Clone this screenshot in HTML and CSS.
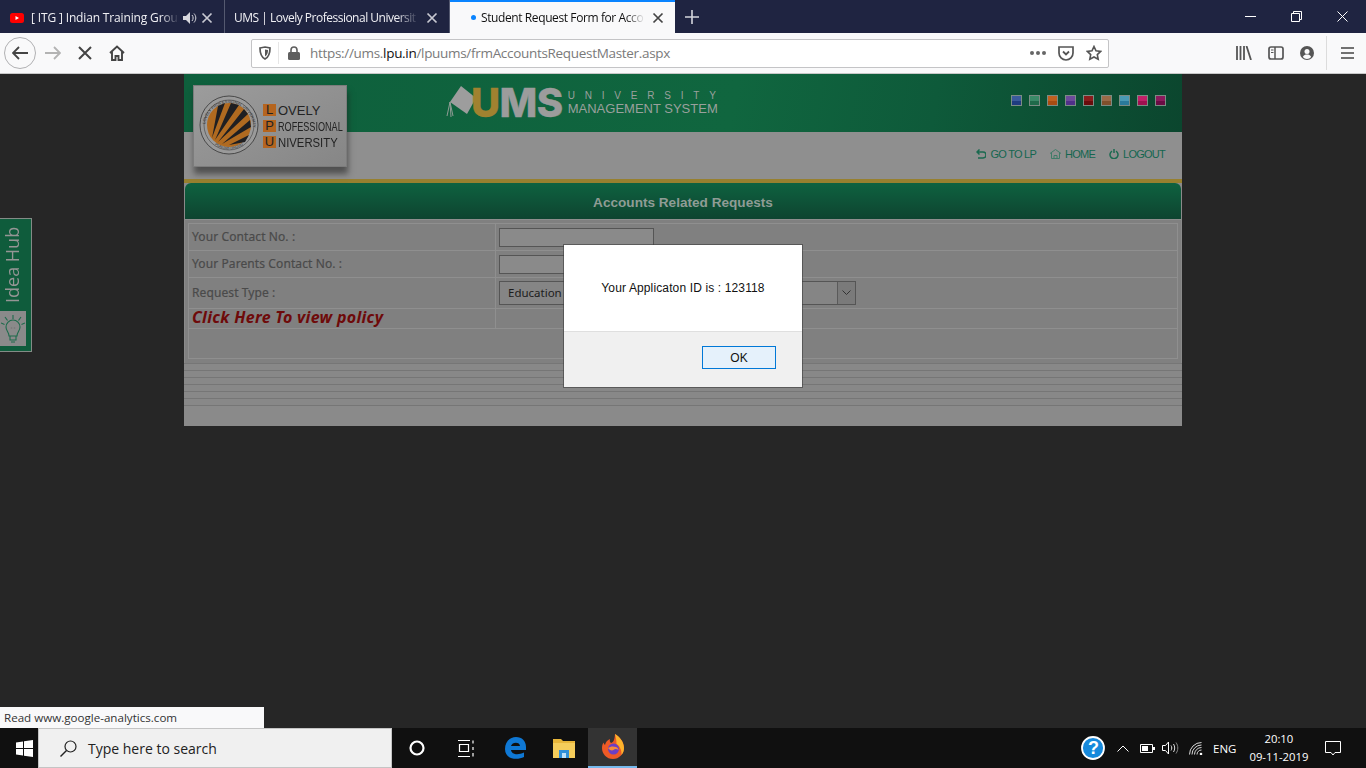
FILE: index.html
```html
<!DOCTYPE html>
<html lang="en">

<head>
    <meta charset="UTF-8">
    <meta name="viewport" content="width=device-width, initial-scale=1.0">
    <title>Student Request Form for Accounts</title>
    <link rel="stylesheet" href="styles.css">
</head>

<body>
    <!-- browser tabs -->
    <div class="tabbar">
        <div class="tab">
            <svg class="favicon" width="14" height="10" viewBox="0 0 14 10"><rect width="14" height="10" rx="2.5" fill="#f00"/><path d="M5.5 3v4L9 5z" fill="#fff"/></svg>
            <span class="tab-title">[ ITG ] Indian Training Groun</span>
            <svg class="tab-audio" width="14" height="12" viewBox="0 0 14 12"><path d="M0 4h3l4-4v12L3 8H0z" fill="#d8d8de"/><path d="M9 3c1.500 1.800 1.500 4.200 0 6M11 1.500c2.400 2.700 2.400 6.300 0 9" stroke="#d8d8de" fill="none"/></svg>
            <svg class="tab-close" width="12" height="12" viewBox="0 0 12 12"><path d="M1.500 1.500l9 9M10.500 1.500l-9 9" stroke="#c8c9d2" stroke-width="1.700"/></svg>
        </div>
        <div class="tab">
            <span class="tab-title tab-title-plain">UMS | Lovely Professional Universit</span>
            <svg class="tab-close" width="12" height="12" viewBox="0 0 12 12"><path d="M1.500 1.500l9 9M10.500 1.500l-9 9" stroke="#c8c9d2" stroke-width="1.700"/></svg>
        </div>
        <div class="tab tab-active">
            <span class="tab-dot"></span>
            <span class="tab-title">Student Request Form for Acco</span>
            <svg class="tab-close" width="12" height="12" viewBox="0 0 12 12"><path d="M1.500 1.500l9 9M10.500 1.500l-9 9" stroke="#444" stroke-width="1.700"/></svg>
        </div>
        <svg class="new-tab" width="14" height="14" viewBox="0 0 14 14"><path d="M7 0v14M0 7h14" stroke="#d4d5dc" stroke-width="1.600"/></svg>
        <div class="win-buttons">
            <svg width="11" height="11" viewBox="0 0 11 11"><path d="M0 5.500h11" stroke="#fff"/></svg>
            <svg width="11" height="11" viewBox="0 0 11 11"><path d="M.5 2.500h8v8h-8zM2.500 2.500v-2h8v8h-2" stroke="#fff" fill="none"/></svg>
            <svg width="11" height="11" viewBox="0 0 11 11"><path d="M.5.500l10 10M10.500.500l-10 10" stroke="#fff"/></svg>
        </div>
    </div>

    <!-- toolbar -->
    <div class="toolbar">
        <div class="back-btn">
            <svg width="16" height="14" viewBox="0 0 16 14"><path d="M7 1L1 7l6 6M1 7h15" stroke="#444" stroke-width="1.800" fill="none"/></svg>
        </div>
        <svg class="tool-forward" width="16" height="14" viewBox="0 0 16 14"><path d="M9 1l6 6-6 6M15 7H0" stroke="#b3b3b3" stroke-width="1.800" fill="none"/></svg>
        <svg class="tool-stop" width="14" height="14" viewBox="0 0 14 14"><path d="M1 1l12 12M13 1L1 13" stroke="#444" stroke-width="2"/></svg>
        <svg class="tool-home" width="16" height="16" viewBox="0 0 16 16"><path d="M1 8l7-6.500L15 8M3 6.500V15h3.500v-4h3v4H13V6.500" stroke="#444" stroke-width="1.900" fill="none"/></svg>
        <div class="urlbar">
            <svg class="url-shield" width="12" height="14" viewBox="0 0 12 14"><path d="M1 2l5-1 5 1c0 5-1 9-5 11C2 11 1 7 1 2z" stroke="#555" stroke-width="1.700" fill="none"/><path d="M6 3.500l3 .6C9 7 8.400 9 6 10.500z" fill="#555"/></svg>
            <span class="url-sep"></span>
            <svg class="url-lock" width="12" height="14" viewBox="0 0 12 14"><path d="M3 6V4a3 3 0 0 1 6 0v2" stroke="#5f5f5f" stroke-width="1.600" fill="none"/><rect y="6" width="12" height="8" rx="1.500" fill="#5f5f5f"/></svg>
            <span class="url-text">https://ums.<b>lpu.in</b>/lpuums/frmAccountsRequestMaster.aspx</span>
            <span class="url-dots"><i></i><i></i><i></i></span>
            <svg class="url-pocket" width="16" height="15" viewBox="0 0 16 15"><path d="M1 1h14v6a7 7 0 0 1-14 0z" stroke="#555" stroke-width="1.700" fill="none"/><path d="M5 5.500l3 3 3-3" stroke="#555" stroke-width="1.800" fill="none"/></svg>
            <svg class="url-star" width="16" height="16" viewBox="0 0 16 16"><path d="M8 1.500l2 4.300 4.700.6-3.400 3.200.9 4.700L8 12l-4.200 2.300.9-4.700L1.300 6.400 6 5.800z" stroke="#555" stroke-width="1.600" fill="none"/></svg>
        </div>
        <div class="tool-right">
            <svg width="16" height="14" viewBox="0 0 16 14"><path d="M1 0v14M4.500 0v14M8 0v14M10.500 0l4.500 14" stroke="#555" stroke-width="1.800" fill="none"/></svg>
            <svg width="16" height="14" viewBox="0 0 16 14"><rect x="1" y="1" width="14" height="12" rx="2" stroke="#555" stroke-width="1.700" fill="none"/><path d="M7 1v12" stroke="#555" stroke-width="1.500"/><path d="M3 4h2.500M3 6.500h2.500" stroke="#555"/></svg>
            <svg width="14" height="14" viewBox="0 0 14 14"><circle cx="7" cy="7" r="7" fill="#555"/><circle cx="7" cy="5.500" r="2.500" fill="#f9f9fa"/><path d="M2.800 11c1-2 2.500-2.500 4.200-2.500s3.200.5 4.200 2.500a5.500 5.500 0 0 1-8.400 0z" fill="#f9f9fa"/></svg>
            <span class="tool-sep"></span>
            <svg width="13" height="12" viewBox="0 0 13 12"><path d="M0 1h13M0 6h13M0 11h13" stroke="#444" stroke-width="1.700"/></svg>
        </div>
    </div>

    <div class="content">
        <div class="page">
            <div class="head-green">
                <div class="ums-logo">
                    <svg class="ums-cap" width="30" height="32" viewBox="0 0 30 32"><path d="M15 0l15 12-9 16L4 16z" fill="#9d9d9d"/><path d="M4 16l-3 14M4 16l1 15M4 16l3 14" stroke="#8f9c95" fill="none"/></svg>
                    <span class="ums-word"><span class="ums-u">U</span>MS</span>
                    <div class="ums-sub">
                        <span class="ums-sub-top">UNIVERSITY</span>
                        <span class="ums-sub-bottom">MANAGEMENT SYSTEM</span>
                    </div>
                </div>
                <div class="swatches">
                    <span class="swatch sw-blue"></span>
                    <span class="swatch sw-green"></span>
                    <span class="swatch sw-orange"></span>
                    <span class="swatch sw-purple"></span>
                    <span class="swatch sw-red"></span>
                    <span class="swatch sw-brown"></span>
                    <span class="swatch sw-teal"></span>
                    <span class="swatch sw-pink"></span>
                    <span class="swatch sw-plum"></span>
                </div>
            </div>
            <div class="head-grey">
                <a class="nav-link">
                    <svg width="10" height="10" viewBox="0 0 10 10"><path d="M3.500.500L1 3l2.500 2.500M1 3h6a2.500 2.500 0 0 1 0 6H2" stroke="#1b6a50" stroke-width="1.500" fill="none"/></svg>
                    GO TO LP
                </a>
                <a class="nav-link">
                    <svg width="11" height="10" viewBox="0 0 11 10"><path d="M0 4.500L5.500.500l5.500 4M1.500 4v5.500h8V4M4 9.500V6.500h3v3" stroke="#3f7c68" fill="none"/></svg>
                    HOME
                </a>
                <a class="nav-link">
                    <svg width="10" height="10" viewBox="0 0 10 10"><path d="M3 2.200a4 4 0 1 0 4 0M5 0v4" stroke="#1b6a50" stroke-width="1.500" fill="none"/></svg>
                    LOGOUT
                </a>
            </div>
            <div class="gold-line"></div>
            <div class="title-bar">Accounts Related Requests</div>
            <div class="form-box">
                <table class="form-table">
                    <tr class="row-contact">
                        <td class="cell-label">Your Contact No. :</td>
                        <td><span class="field"></span></td>
                    </tr>
                    <tr class="row-contact">
                        <td class="cell-label">Your Parents Contact No. :</td>
                        <td><span class="field"></span></td>
                    </tr>
                    <tr class="row-type">
                        <td class="cell-label">Request Type :</td>
                        <td>
                            <div class="select">
                                <span class="select-value">Education</span>
                                <span class="select-arrow">
                                    <svg width="9" height="6" viewBox="0 0 9 6"><path d="M.5.500l4 4 4-4" stroke="#333" fill="none"/></svg>
                                </span>
                            </div>
                        </td>
                    </tr>
                    <tr class="row-policy">
                        <td class="cell-policy">Click Here To view policy</td>
                        <td></td>
                    </tr>
                    <tr class="row-empty">
                        <td colspan="2"></td>
                    </tr>
                </table>
            </div>
            <div class="stripes"></div>
            <div class="page-foot"></div>

            <!-- logo card sits over both header bands -->
            <div class="logo-card">
                <svg class="seal" width="60" height="60" viewBox="0 0 60 60">
                    <circle cx="30" cy="30" r="29" fill="#9a9a9a" stroke="#333" stroke-width=".8"/>
                    <circle cx="30" cy="30" r="25" fill="none" stroke="#333" stroke-width=".5"/>
                    <defs>
                        <path id="sealTop" d="M6 32a24 24 0 0 1 48 0"/>
                        <path id="sealBottom" d="M9 42a24 24 0 0 0 42 0"/>
                    </defs>
                    <text class="seal-text"><textPath href="#sealTop" startOffset="4%">LOVELY PROFESSIONAL UNIVERSITY</textPath></text>
                    <text class="seal-text"><textPath href="#sealBottom" startOffset="20%">PUNJAB (INDIA)</textPath></text>
                    <circle cx="30" cy="30" r="22" fill="#b06a20"/>
                    <path d="M13 43L19 11l7-3zM16 45L32 8l8 2zM19 47L45 14l4 5zM23 49l28-24 1 7zM30 50l20-10-4 7z" fill="#1f1f22"/>
                </svg>
                <div class="logo-words">
                    <div class="logo-row"><span class="logo-cap">L</span><span>OVELY</span></div>
                    <div class="logo-row"><span class="logo-cap">P</span><span class="logo-narrow">ROFESSIONAL</span></div>
                    <div class="logo-row"><span class="logo-cap">U</span><span class="logo-mid">NIVERSITY</span></div>
                </div>
            </div>
        </div>

        <div class="idea-hub">
            <span class="idea-text">Idea Hub</span>
            <div class="idea-tile">
                <svg width="24" height="30" viewBox="0 0 24 30"><path d="M8 22c0-4-3-5-3-9a7 7 0 0 1 14 0c0 4-3 5-3 9zM9 22v4h6v-4M10 28h4" stroke="#1c6b4b" stroke-width="1.100" fill="none"/><path d="M12 1v4M4 3l2.500 3.500M20 3l-2.500 3.500M0 9l3.500 1.500M24 9l-3.500 1.500" stroke="#1c6b4b" stroke-width="1.100"/><circle cx="10.500" cy="14" r=".8" fill="#777"/><circle cx="13.500" cy="14" r=".8" fill="#777"/></svg>
            </div>
        </div>

        <div class="dialog">
            <div class="dialog-body">Your Applicaton ID is : 123118</div>
            <div class="dialog-foot"><button class="dialog-ok">OK</button></div>
        </div>

        <div class="status-tip">Read www.google-analytics.com</div>
    </div>

    <!-- windows taskbar -->
    <div class="taskbar">
        <div class="task-start">
            <svg width="17" height="17" viewBox="0 0 17 17"><path d="M0 2.500L7 1.500v6.500H0zM8 1.300L17 0v8H8zM0 9h7v6.500l-7-1zM8 9h9v8l-9-1.300z" fill="#fff"/></svg>
        </div>
        <div class="task-search">
            <svg width="17" height="17" viewBox="0 0 17 17"><circle cx="10.500" cy="6.500" r="5.500" stroke="#222" stroke-width="1.200" fill="none"/><path d="M6.500 10.500L.5 16.500" stroke="#222" stroke-width="1.400"/></svg>
            <span>Type here to search</span>
        </div>
        <div class="task-icon">
            <svg width="16" height="16" viewBox="0 0 16 16"><circle cx="8" cy="8" r="6.500" stroke="#fff" stroke-width="2.200" fill="none"/></svg>
        </div>
        <div class="task-icon">
            <svg width="17" height="17" viewBox="0 0 17 17"><path d="M1 .500h12M1 16.500h12M2.500 4.500h9v7h-9z" stroke="#fff" stroke-width="1.200" fill="none"/><path d="M16 .500v3M16 7v3M16 13v3.500" stroke="#fff" stroke-width="1.200"/></svg>
        </div>
        <div class="task-icon">
            <svg width="22" height="22" viewBox="0 0 22 22"><path d="M1 12C1 5 6 0 12 0c6 0 10 4 10 10v3H7c.5 4.500 7 5.500 13 2.500V20c-7 3.500-19 2.500-19-8zM7 9h9c0-4.500-8-4.500-9 0z" fill="#0f78d4"/></svg>
        </div>
        <div class="task-icon">
            <svg width="22" height="20" viewBox="0 0 22 20"><path d="M0 1h8l2 2h12v4H0z" fill="#e8b63a"/><path d="M0 5h22v15H0z" fill="#f5cd5b"/><path d="M6 12h10v8H6z" fill="#2f8fd8"/><path d="M9 15h4v5H9z" fill="#bde0f7"/></svg>
        </div>
        <div class="task-icon task-icon-active">
            <svg width="24" height="26" viewBox="0 0 24 26"><path d="M12 25C5.500 25 1 20 1 14c0-2 .5-4 1.500-5.500C3 10 3.500 10.500 4 11c.5-3 2.500-5 5-6-.5 2 0 3 1 4 2-.5 3.500-2 4-9 5 3 9 8 9 14 0 6-5 11-11 11z" fill="#ee5a26"/><path d="M14 0c4 2.500 9 7.500 9 14 0 3-1 5-2.500 7 .5-5-2-9-5-11 0-3-.5-6-1.500-10z" fill="#fcb32c"/><circle cx="12.500" cy="15" r="5.500" fill="#6b3fc4"/><path d="M7 14c2-1.500 5-2 8-1 1.500.5 2.500 2 2.500 3-2-1.500-4-1-5 0-1.500 1-3.500 .5-5.500-2z" fill="#f58a3c"/></svg>
        </div>
        <div class="tray">
            <svg class="tray-help" width="24" height="24" viewBox="0 0 24 24"><circle cx="12" cy="12" r="11" fill="#1689dc" stroke="#fff" stroke-width="1.800"/></svg>
            <span class="tray-help-mark">?</span>
            <svg class="tray-chevron" width="12" height="7" viewBox="0 0 12 7"><path d="M.5 6.500L6 1l5.500 5.500" stroke="#fff" fill="none"/></svg>
            <svg class="tray-battery" width="15" height="9" viewBox="0 0 15 9"><path d="M.5.500h12v8H.5z" stroke="#fff" fill="none"/><path d="M2 2h6v5H2zM13 3h2v3h-2z" fill="#fff"/></svg>
            <svg class="tray-speaker" width="17" height="14" viewBox="0 0 17 14"><path d="M.5 4.500h3l3-3.500v12l-3-3.500h-3z" stroke="#fff" fill="none"/><path d="M9 4.500c1 1.500 1 3.500 0 5M11.500 3c1.600 2.500 1.600 5.500 0 8" stroke="#ddd" fill="none"/><path d="M14 1.500c2.400 3.500 2.400 7.500 0 11" stroke="#888" fill="none"/></svg>
            <svg class="tray-wifi" width="14" height="13" viewBox="0 0 14 13"><path d="M.5 12.500a12 12 0 0 1 12-12M3 12.500A9.500 9.500 0 0 1 12.500 3M5.500 12.500a7 7 0 0 1 7-7M8 12.500a4.500 4.500 0 0 1 4.500-4.500" stroke="#d8d8d8" fill="none"/><circle cx="12" cy="12" r="1.300" fill="#fff"/></svg>
            <span class="tray-lang">ENG</span>
            <div class="tray-clock"><span>20:10</span><span>09-11-2019</span></div>
            <svg class="tray-notify" width="16" height="15" viewBox="0 0 16 15"><path d="M.5.500h15v11H10l-2 2.500-2-2.500H.5z" stroke="#fff" fill="none"/></svg>
        </div>
    </div>
</body>
</html>
```

FILE: styles.css
```css
html, body {
    height: 100%;
    margin: 0;
    overflow: hidden;
    font-family: "Open Sans", sans-serif;
}

body {
    display: flex;
    flex-direction: column;
    width: 1366px;
    height: 768px;
    background-color: #262626;
}

/* tabs */
.tabbar {
    display: flex;
    align-items: stretch;
    flex: 0 0 33px;
    background-color: #1f2441;
}

.tab {
    display: flex;
    align-items: center;
    box-sizing: border-box;
    width: 225px;
    padding: 2px 11px 0 10px;
    border-right: 1px solid #555a70;
    color: #f0f0f4;
    font-size: 12px;
}

.tab-active {
    background-color: #f9f9fa;
    border-top: 2px solid #0a84ff;
    border-right: none;
    padding: 0 11px 0 21px;
    color: #111;
}

.tab-title {
    flex: 1;
    min-width: 0;
    margin-left: 7px;
    white-space: nowrap;
    letter-spacing: -0.15px;
    -webkit-mask-image: linear-gradient(to right, #000 88%, transparent 100%);
    mask-image: linear-gradient(to right, #000 88%, transparent 100%);
}

.tab-active .tab-title {
    letter-spacing: -0.4px;
}

.tab-title-plain {
    margin-left: -1px;
    letter-spacing: -0.5px;
}

.favicon {
    flex: none;
}

.tab-audio {
    flex: none;
    margin: 0 -3px 0 4px;
}

.tab-close {
    flex: none;
    margin-left: 7px;
}

.tab-dot {
    width: 5px;
    height: 5px;
    border-radius: 50%;
    background-color: #0a84ff;
    flex: none;
    margin-right: -2px;
}

.new-tab {
    align-self: center;
    margin-left: 10px;
}

.win-buttons {
    display: flex;
    align-items: center;
    gap: 35px;
    margin-left: auto;
    padding-right: 18px;
}

/* toolbar */
.toolbar {
    display: flex;
    align-items: center;
    flex: 0 0 41px;
    box-sizing: border-box;
    background-color: #f9f9fa;
    border-bottom: 1px solid #c8c8c8;
    padding: 0 12px 0 4px;
}

.back-btn {
    display: flex;
    align-items: center;
    justify-content: center;
    box-sizing: border-box;
    width: 32px;
    height: 32px;
    border: 1px solid #b1b1b3;
    border-radius: 50%;
}

.tool-forward {
    margin-left: 9px;
}

.tool-stop {
    margin-left: 17px;
}

.tool-home {
    margin-left: 17px;
}

.urlbar {
    display: flex;
    align-items: center;
    box-sizing: border-box;
    width: 858px;
    height: 29px;
    margin-left: 126px;
    background-color: #fff;
    border: 1px solid #c4c4c6;
    border-radius: 2px;
    font-size: 13.5px;
}

.url-shield {
    margin-left: 7px;
}

.url-sep {
    width: 1px;
    height: 22px;
    margin-left: 7px;
    background-color: #e6e6e6;
}

.url-lock {
    margin-left: 9px;
}

.url-text {
    margin-left: 10px;
    color: #7a7a7a;
    white-space: nowrap;
    letter-spacing: -0.31px;
}

.url-text b {
    font-weight: 400;
    color: #111;
}

.url-dots {
    display: flex;
    gap: 2px;
    margin-left: auto;
}

.url-dots i {
    width: 4px;
    height: 4px;
    border-radius: 50%;
    background-color: #666;
}

.url-pocket {
    margin-left: 12px;
}

.url-star {
    margin-left: 12px;
    margin-right: 6px;
}

.tool-right {
    display: flex;
    align-items: center;
    gap: 16px;
    margin-left: auto;
}

.tool-sep {
    width: 1px;
    height: 34px;
    background-color: #dcdcdc;
    margin: 0 -2px 0 -4px;
}

/* page */
.content {
    position: relative;
    flex: 1;
    background-color: #262626;
}

.page {
    position: relative;
    width: 998px;
    margin-left: 184px;
    background-color: #8a8a8a;
}

.head-green {
    display: flex;
    justify-content: space-between;
    height: 58px;
    box-sizing: border-box;
    background: linear-gradient(100deg, #0e5f3c 0%, #10663f 55%, #0e5a3a 75%, #0b462e 100%);
    padding: 9px 16px 0 262px;
}

.ums-logo {
    display: flex;
    align-items: flex-start;
    position: relative;
}

.ums-cap {
    margin-top: 3px;
    margin-right: -5px;
}

.ums-word {
    font-family: Inter, "Liberation Sans", sans-serif;
    font-size: 40px;
    font-weight: 800;
    line-height: 40px;
    letter-spacing: -0.5px;
    color: #9c9c9c;
    -webkit-text-stroke: 0.4px #9c9c9c;
}

.ums-u {
    color: #a08230;
    -webkit-text-stroke: 0.4px #a08230;
}

.ums-sub {
    display: flex;
    flex-direction: column;
    margin-left: 5px;
    margin-top: 7px;
    color: #9aa09d;
    font-family: "Liberation Sans", sans-serif;
}

.ums-sub-top {
    font-size: 10px;
    line-height: 12px;
    letter-spacing: 9.8px;
}

.ums-sub-bottom {
    font-size: 13px;
    line-height: 14px;
}

.swatches {
    display: flex;
    gap: 7px;
    margin-top: 12px;
}

.swatch {
    width: 9px;
    height: 9px;
    border: 1px solid #7b8c84;
}

.sw-blue { background: linear-gradient(#3a5a9c 50%, #1f3c80 50%); }
.sw-green { background: linear-gradient(#3a8a68 50%, #1f6a4a 50%); }
.sw-orange { background: linear-gradient(#c0601f 50%, #a84c12 50%); }
.sw-purple { background: linear-gradient(#6b4a9a 50%, #50308a 50%); }
.sw-red { background: linear-gradient(#8a1c1c 50%, #6a0c0c 50%); }
.sw-brown { background: linear-gradient(#9a6a48 50%, #80502c 50%); }
.sw-teal { background: linear-gradient(#4a9ab5 50%, #2a7a9a 50%); }
.sw-pink { background: linear-gradient(#c02068 50%, #a01050 50%); }
.sw-plum { background: linear-gradient(#8a1a5c 50%, #6a0c44 50%); }

.head-grey {
    display: flex;
    justify-content: flex-end;
    align-items: flex-start;
    gap: 14px;
    height: 47px;
    box-sizing: border-box;
    padding: 15px 17px 0 0;
    background-color: #8f8f8f;
}

.nav-link {
    display: flex;
    align-items: center;
    gap: 4px;
    font-family: "Liberation Sans", sans-serif;
    font-size: 11px;
    line-height: 14px;
    letter-spacing: -0.75px;
    color: #146650;
}

.gold-line {
    height: 4px;
    background-color: #97802f;
}

.title-bar {
    height: 36px;
    margin: 0 1px;
    border-radius: 6px 6px 0 0;
    background: linear-gradient(#0e6240, #0e4430);
    color: #8f9c95;
    font-family: "Liberation Sans", "Open Sans", sans-serif;
    font-weight: 700;
    font-size: 13.6px;
    line-height: 39px;
    text-align: center;
}

.form-box {
    box-sizing: border-box;
    height: 144px;
    padding: 3px 3px 3px 3px;
    margin: 0 1px;
    background-color: #808080;
    border-top: 1px solid #8e8e8e;
}

.form-table {
    width: 990px;
    height: 136px;
    border-collapse: collapse;
    table-layout: fixed;
    border: 1px solid #949494;
    font-family: "Noto Sans", sans-serif;
    font-size: 12px;
    color: #4a4a4a;
}

.form-table td {
    border: 1px solid #8f8f8f;
    padding: 0 0 0 3px;
    vertical-align: middle;
}

.form-table td:first-child {
    width: 303px;
}

.row-contact {
    height: 27px;
}

.row-type {
    height: 31px;
}

.row-policy {
    height: 18px;
}

.form-table .cell-label {
    padding-bottom: 2px;
    letter-spacing: 0.1px;
    -webkit-text-stroke: 0.2px #4a4a4a;
}

.form-table .cell-policy {
    padding-bottom: 2px;
    color: #6e0a0a;
    font-weight: 700;
    font-style: italic;
    font-size: 16px;
    line-height: 17px;
    letter-spacing: 0.3px;
    white-space: nowrap;
}

.field {
    display: block;
    box-sizing: border-box;
    width: 155px;
    height: 19px;
    border: 1px solid #555;
    background-color: #8a8a8a;
}

.select {
    display: flex;
    align-items: center;
    justify-content: space-between;
    box-sizing: border-box;
    width: 357px;
    height: 24px;
    border: 1px solid #555;
    background-color: #858585;
    padding-left: 8px;
    color: #1c1c1c;
    font-size: 11.5px;
}

.select-value {
    margin-bottom: 2px;
}

.select-arrow {
    display: flex;
    align-items: center;
    justify-content: center;
    width: 17px;
    height: 22px;
    background-color: #7a7a7a;
    border-left: 1px solid #5a5a5a;
}

.stripes {
    height: 43px;
    background: repeating-linear-gradient(#767676 0, #767676 1px, #888 1px, #888 7px);
}

.page-foot {
    height: 20px;
}

.logo-card {
    position: absolute;
    left: 9px;
    top: 11px;
    display: flex;
    align-items: center;
    box-sizing: border-box;
    width: 154px;
    height: 82px;
    padding: 0 0 0 5px;
    background: linear-gradient(150deg, #9c9c9c, #868686);
    border: 1px solid #7c7c7c;
    box-shadow: 1px 7px 6px rgba(30, 30, 30, 0.55);
}

.seal {
    flex: none;
    margin-bottom: 2px;
}

.seal-text {
    font-family: "Liberation Sans", sans-serif;
    font-size: 4px;
    fill: #333;
}

.logo-words {
    display: flex;
    flex-direction: column;
    gap: 4px;
    margin-left: 4px;
    font-family: "Liberation Sans", sans-serif;
    font-size: 13px;
    color: #232323;
}

.logo-row {
    display: flex;
    align-items: center;
    gap: 2px;
    height: 12px;
    white-space: nowrap;
}

.logo-narrow {
    transform: scaleX(0.7);
    transform-origin: left center;
}

.logo-mid {
    transform: scaleX(0.87);
    transform-origin: left center;
}

.logo-cap {
    width: 13px;
    height: 12px;
    background-color: #b5651f;
    text-align: center;
    line-height: 12px;
}

/* side tab */
.idea-hub {
    position: absolute;
    left: 0;
    top: 144px;
    display: flex;
    flex-direction: column;
    align-items: flex-start;
    box-sizing: border-box;
    width: 32px;
    height: 134px;
    background-color: #0f5c3c;
    border: 1px solid #838b86;
    border-left: none;
}

.idea-text {
    writing-mode: vertical-rl;
    transform: rotate(180deg);
    width: 24px;
    height: 75px;
    margin-top: 9px;
    color: #959595;
    font-family: "Open Sans", sans-serif;
    font-size: 18px;
    line-height: 24px;
    white-space: nowrap;
}

.idea-tile {
    display: flex;
    align-items: center;
    justify-content: center;
    width: 26px;
    height: 35px;
    margin-top: auto;
    margin-bottom: 5px;
    background-color: #8a8a8a;
}

/* alert box */
.dialog {
    position: absolute;
    left: 564px;
    top: 171px;
    display: flex;
    flex-direction: column;
    width: 238px;
    height: 142px;
    background-color: #fff;
    box-shadow: 0 0 0 1px rgba(60, 60, 60, 0.6);
    font-family: "Liberation Sans", sans-serif;
    font-size: 12px;
    color: #111;
}

.dialog-body {
    flex: 0 0 86px;
    display: flex;
    align-items: center;
    justify-content: center;
    letter-spacing: 0.13px;
}

.dialog-foot {
    flex: 1;
    display: flex;
    justify-content: flex-end;
    align-items: flex-start;
    box-sizing: border-box;
    padding: 14px 26px 0 0;
    background-color: #f0f0f0;
    border-top: 1px solid #dfdfdf;
}

.dialog-ok {
    box-sizing: border-box;
    width: 74px;
    height: 23px;
    padding: 0;
    background-color: #e5f1fb;
    border: 1px solid #0078d7;
    color: #111;
    font-family: "Liberation Sans", sans-serif;
    font-size: 12px;
}

.status-tip {
    position: absolute;
    left: 0;
    bottom: 0;
    box-sizing: border-box;
    width: 264px;
    height: 21px;
    padding-left: 4px;
    background-color: #f9f9fa;
    color: #333;
    font-size: 11.6px;
    line-height: 21px;
}

/* taskbar */
.taskbar {
    display: flex;
    align-items: center;
    flex: 0 0 40px;
    background-color: #101010;
    color: #fff;
}

.task-start {
    display: flex;
    justify-content: center;
    width: 38px;
    padding-left: 10px;
    box-sizing: border-box;
}

.task-search {
    display: flex;
    align-items: center;
    gap: 11px;
    box-sizing: border-box;
    width: 354px;
    height: 40px;
    padding-left: 21px;
    background-color: #f0f0f0;
    border: 1px solid #c4c4c4;
    color: #222;
    font-size: 14px;
}

.task-icon {
    display: flex;
    align-items: center;
    justify-content: center;
    width: 49px;
    height: 40px;
    box-sizing: border-box;
}

.task-icon-active {
    background-color: #333;
    border-bottom: 2px solid #76b9ed;
}

.tray {
    display: flex;
    align-items: center;
    position: relative;
    margin-left: auto;
    height: 40px;
    width: 285px;
}

.tray-help-mark {
    position: absolute;
    left: 7px;
    top: 8px;
    width: 10px;
    text-align: center;
    font-family: "Liberation Sans", sans-serif;
    font-weight: 700;
    font-size: 18px;
    line-height: 24px;
    color: #fff;
}

.tray-chevron {
    margin-left: 12px;
}

.tray-battery {
    margin-left: 11px;
}

.tray-speaker {
    margin-left: 7px;
}

.tray-wifi {
    margin-left: 10px;
}

.tray-lang {
    margin-left: 10px;
    font-size: 11.5px;
}

.tray-clock {
    display: flex;
    flex-direction: column;
    align-items: center;
    margin-left: 13px;
    font-size: 11.3px;
    line-height: 18px;
}

.tray-notify {
    margin-left: 17px;
}
```
